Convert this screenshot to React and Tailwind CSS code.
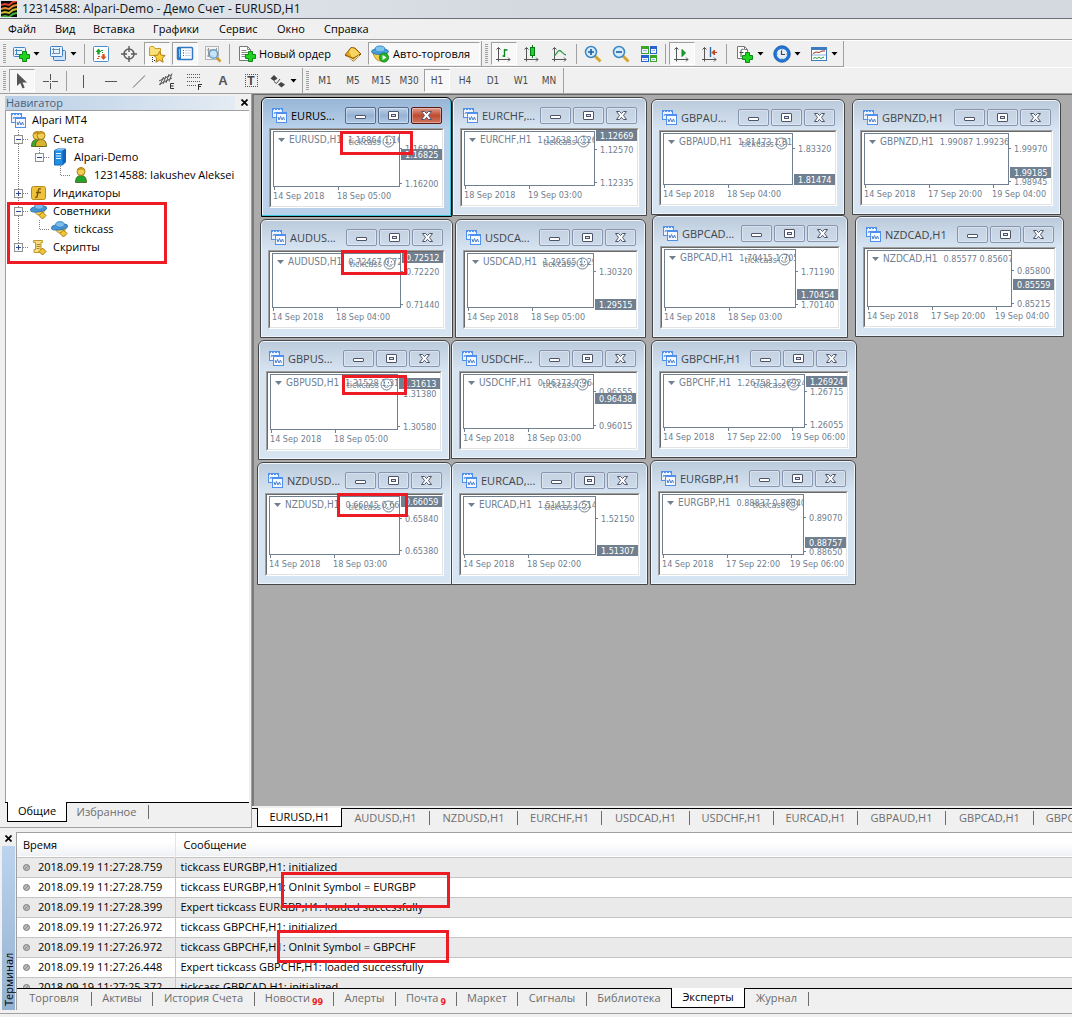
import React from "react";

const UI = "font-['Open_Sans','Noto_Sans',sans-serif]";
const NARROW = "font-['DejaVu_Sans_Condensed','DejaVu_Sans',sans-serif]";

/* ---------- small building blocks ---------- */

function Svg({ w = 18, h = 18, children, crisp = false }) {
  return (
    <svg
      width={w}
      height={h}
      viewBox={`0 0 ${w} ${h}`}
      fill="none"
      className="shrink-0"
      aria-hidden="true"
      shapeRendering={crisp ? "crispEdges" : "auto"}
    >
      {children}
    </svg>
  );
}

const Plus = ({ x = 7, y = 6 }) => (
  <path
    transform={`translate(${x} ${y})`}
    d="M3.500 .5h4v3h3v4h-3v3h-4v-3h-3v-4h3z"
    fill="#1fd41f"
    stroke="#0a8a14"
  />
);

const Axes = () => (
  <path d="M3.500 2.500v14M1 14.500h14M1.500 4.500l2-2 2 2M13 12.500l2 2-2 2" stroke="#555" />
);

const Shades = {
  newChart: (
    <Svg>
      <rect x="1.500" y="2.500" width="12" height="9" rx="1" fill="#e8f3fd" stroke="#3f86c6" />
      <path d="M4.500 4v6M3 5.500h7M3 9.500h7" stroke="#3f86c6" />
      <Plus />
    </Svg>
  ),
  profiles: (
    <Svg>
      <rect x="4.500" y="5.500" width="12" height="10" rx="1" fill="#cfe4f8" stroke="#3f7fc0" />
      <rect x="1.500" y="1.500" width="12" height="10" rx="1" fill="#e8f3fd" stroke="#3f7fc0" />
      <path d="M4.500 3v6M3 4.500h8M3 8.500h8M10.500 3v6" stroke="#6b8fb5" />
    </Svg>
  ),
  market: (
    <Svg>
      <rect x="1.500" y="1.500" width="15" height="15" rx="1" fill="#fff" stroke="#4a90d0" />
      <path d="M6.500 3.500l3 3.500H7.700v2.500H5.300V7H3.500z" fill="#18a32a" />
      <path d="M11.500 15l3-3.500h-1.800V9h-2.400v2.500H8.500z" fill="#d8501e" />
      <path d="M9 5.500h2M10 7.500h1" stroke="#18a32a" />
      <path d="M6 11.500h2M5 13.500h2" stroke="#d8501e" />
    </Svg>
  ),
  cross: (
    <Svg>
      <circle cx="9" cy="9" r="5" stroke="#5c5c5c" strokeWidth="1.500" />
      <path d="M9 1v6M9 11v6M1 9h6M11 9h6" stroke="#5c5c5c" strokeWidth="1.400" />
    </Svg>
  ),
  folderStar: (
    <Svg>
      <path d="M1.500 10.500v-8l1-1h3l1.500 2h5.500v7z" fill="#f8e07a" stroke="#c99b22" />
      <path d="M4.500 12v5M6 15.500h3" stroke="#333" strokeDasharray="1 1" />
      <path d="M11.500 6.500l1.700 3.600 4 .4-3 2.700.9 4-3.600-2.100-3.600 2.100.9-4-3-2.700 4-.4z" fill="#f9cf3a" stroke="#b07d10" />
    </Svg>
  ),
  terminal: (
    <Svg>
      <rect x="1.500" y="2.500" width="15" height="12" rx="1" fill="#fff" stroke="#2f78c4" strokeWidth="1.500" />
      <rect x="2" y="3" width="3" height="11" fill="#2f78c4" />
      <path d="M3 5h1M3 7h1M3 9h1M3 11h1" stroke="#fff" />
      <path d="M9 5.500h6M9 8h6M9 10.500h6" stroke="#c6d3e2" />
      <path d="M7 5.500h1M7 10.500h1" stroke="#d33" />
      <path d="M7 8h1" stroke="#234" />
    </Svg>
  ),
  tester: (
    <Svg>
      <rect x="1.500" y="1.500" width="13" height="13" fill="#f4f4f4" stroke="#b4b4b4" />
      <path d="M4.500 3v9M3 5h9M12.500 3v9M3 11h7" stroke="#999" />
      <path d="M12.500 12.500l4 4" stroke="#d09a30" strokeWidth="2.600" />
      <circle cx="9.500" cy="9" r="4.200" fill="#bfe0f7" fillOpacity=".85" stroke="#5b9bd0" strokeWidth="1.300" />
    </Svg>
  ),
  newOrder: (
    <Svg>
      <path d="M1.500 1.500h8l3 3v11h-11z" fill="#fff" stroke="#777" />
      <path d="M9.500 1.500v3h3M3.500 5.500h5M3.500 7.500h7M3.500 9.500h5M3.500 11.500h4" stroke="#888" />
      <Plus />
    </Svg>
  ),
  book: (
    <Svg>
      <path d="M1 10l6-7.500 4 .5 6 6-7.500 7z" fill="#e2a520" stroke="#8f5c0c" />
      <path d="M7.500 3l3 1L16 9l-6.500 3.500-2-1L5 7z" fill="#f7d562" />
      <path d="M1.500 10l7.500 3.500L16.500 9" stroke="#8f5c0c" />
      <path d="M3 12l6.500 3 5.500-4.500" stroke="#fff0bd" />
    </Svg>
  ),
  auto: (
    <Svg>
      <path d="M2 8c2 6 4 8 8 8s6-4 6-8z" fill="#f1cd4b" stroke="#c19422" />
      <ellipse cx="9" cy="6.500" rx="8.500" ry="3" fill="#4aa0dc" stroke="#2b78b5" />
      <ellipse cx="9" cy="4" rx="4.800" ry="3" fill="#7fc3f0" stroke="#3a8ac8" />
      <circle cx="13" cy="12.500" r="4.500" fill="#2bb52b" stroke="#0f8a16" />
      <path d="M11.500 10l4 2.500-4 2.500z" fill="#fff" />
    </Svg>
  ),
  bars: (
    <Svg>
      <Axes />
      <path d="M9.500 4v8M7.500 11h2M9.500 5h3" stroke="#0a8a20" strokeWidth="1.400" />
    </Svg>
  ),
  candles: (
    <Svg>
      <Axes />
      <path d="M9.500 0v13" stroke="#0a7a18" />
      <rect x="7.500" y="2.500" width="4" height="8" fill="#18d42c" stroke="#0a7a18" />
    </Svg>
  ),
  line: (
    <Svg>
      <Axes />
      <path d="M3 11c2-1 3.500-5.500 5.500-5.500S12 9.500 15 10" stroke="#3b9a4c" strokeWidth="1.300" />
    </Svg>
  ),
  zoomIn: (
    <Svg>
      <path d="M11 11l5.500 5.500" stroke="#d8a52c" strokeWidth="3" />
      <circle cx="7" cy="7" r="5.500" fill="#d4ecfb" stroke="#3d86c4" strokeWidth="1.500" />
      <path d="M7 4v6M4 7h6" stroke="#1c5f9c" strokeWidth="1.600" />
    </Svg>
  ),
  zoomOut: (
    <Svg>
      <path d="M11 11l5.500 5.500" stroke="#d8a52c" strokeWidth="3" />
      <circle cx="7" cy="7" r="5.500" fill="#d4ecfb" stroke="#3d86c4" strokeWidth="1.500" />
      <path d="M4 7h6" stroke="#1c5f9c" strokeWidth="1.600" />
    </Svg>
  ),
  tile: (
    <Svg crisp>
      <path d="M1 1h8v8H1zM10 10h7v7h-7z" fill="#3da526" />
      <path d="M10 1h7v8h-7zM1 10h8v7H1z" fill="#2a62cf" />
      <path d="M2 4h6v4H2zM11 4h5v4h-5zM2 13h6v3H2zM11 13h5v3h-5z" fill="#eef4ff" />
      <path d="M3 5.500h4M12 5.500h3M3 14.500h4M12 14.500h3" stroke="#9bb4d8" />
    </Svg>
  ),
  autoscroll: (
    <Svg>
      <Axes />
      <path d="M9 4.500v7l3.500-3.500z" fill="#18a32a" stroke="#0a8a20" />
    </Svg>
  ),
  shift: (
    <Svg>
      <Axes />
      <path d="M9.500 2v10" stroke="#2b6ea8" strokeWidth="1.400" />
      <path d="M16 7.500h-3M13.500 5l-2.500 2.500 2.500 2.500z" fill="#c8421a" stroke="#c8421a" />
    </Svg>
  ),
  indicators: (
    <Svg>
      <path d="M1.500 1.500h7l3 3v9h-10z" fill="#fff" stroke="#777" />
      <path d="M8.500 1.500v3h3" stroke="#777" />
      <path d="M7.500 4.500c-2-.8-2.500.5-2.500 2v5.500M3.500 7.500h4" stroke="#444" />
      <Plus x={6} y={7} />
    </Svg>
  ),
  clock: (
    <Svg>
      <circle cx="9" cy="9" r="6.800" fill="#e6f0fa" stroke="#1f74d6" strokeWidth="3" />
      <circle cx="9" cy="9" r="8.300" stroke="#124f9c" strokeWidth=".7" />
      <path d="M8.500 5.500v4h3.500" stroke="#444" strokeWidth="1.200" />
      <path d="M9 4v.8M9 13.200v.8M4 9h.8M13.200 9h.8" stroke="#777" />
    </Svg>
  ),
  templates: (
    <Svg>
      <rect x="1.500" y="2.500" width="15" height="13" fill="#fff" stroke="#3b7cc0" />
      <path d="M1 3.500h16" stroke="#3b7cc0" strokeWidth="3" />
      <path d="M2 10h14" stroke="#8ab0d8" />
      <path d="M3 8.500l3-1.500 3 .5 3-1.500h3" stroke="#a03018" />
      <path d="M3 13.500l2-1 2 1 2-1.500 2 1.500 3-1.500" stroke="#2b9a3c" />
    </Svg>
  ),
  cursor: (
    <Svg>
      <path d="M4 1v13l3.200-3 2.300 5.500 2.200-1L9.500 10.500H14z" fill="#555" />
    </Svg>
  ),
  crosshair: (
    <Svg crisp>
      <path d="M9.500 2v6M9.500 11v6M2 9.500h6M11 9.500h6M9 9.500h1" stroke="#555" />
    </Svg>
  ),
  vline: (
    <Svg crisp>
      <path d="M9.500 3v13" stroke="#555" />
    </Svg>
  ),
  hline: (
    <Svg crisp>
      <path d="M3 9.500h12" stroke="#555" />
    </Svg>
  ),
  diag: (
    <Svg>
      <path d="M3 15.500L15 3.500" stroke="#666" />
    </Svg>
  ),
  channel: (
    <Svg>
      <path d="M1 9L13 3M1 12.500L14 6M2 13l3.500-8M5 12l3-8M8 11l3-9M11 9.500l3-8" stroke="#555" />
      <path d="M12.500 11.500v5M12.500 11.500h3.500M12.500 14h3M12.500 16.500h3.500" stroke="#333" />
    </Svg>
  ),
  fib: (
    <Svg crisp>
      <path d="M1 2.500h14M1 5.500h14M1 9.500h14M1 13.500h9" stroke="#555" strokeDasharray="1 1" />
      <path d="M12.500 12v6M12 12.500h4M12 14.500h3" stroke="#333" />
    </Svg>
  ),
  shapes: (
    <Svg>
      <path d="M1.500 6.500L5 3l3.500 3.500L5 9z" fill="#444" />
      <path d="M5 9.500l2.500 2 3.500-4.500" stroke="#444" />
      <path d="M9 12.500l3-2.500 4 2.500-3.500 3z" fill="#444" />
    </Svg>
  ),
};

const ChartIcon = () => (
  <Svg w={15} h={15}>
    <rect x=".5" y=".5" width="10" height="9" fill="#eef5ff" stroke="#4f90ee" />
    <path d="M0 1.500h11" stroke="#4f90ee" strokeDasharray="2 1" />
    <path d="M2 6l1-2 1.500 2L6 4" stroke="#5b93dd" />
    <rect x="4.500" y="4.500" width="10" height="10" fill="#f6faff" stroke="#4f90ee" />
    <path d="M4 5.500h11" stroke="#4f90ee" />
    <path d="M6 9l1 3 1.500-3.500L10 12l1.500-3 1 3" stroke="#4d7fd0" />
  </Svg>
);

/* ---------- title bar, menu, toolbars ---------- */

function TitleBar() {
  return (
    <header className="flex h-[19px] items-center gap-[5px] overflow-hidden border-b border-[#6b6f74] bg-linear-to-r from-[#e4e9ee] via-[#d3d9df] to-[#d3d9df] pl-px text-xs text-[#111]">
      <svg width="16" height="16" viewBox="0 0 16 16" className="shrink-0" fill="none" strokeWidth="2" aria-hidden="true">
        <rect width="16" height="16" fill="#0a0a0a" />
        <path d="M0 4l4-1 4 1 4-3 4-1" stroke="#e8412a" />
        <path d="M0 8l4-1 4 1 4-3 4-1" stroke="#e8912a" />
        <path d="M0 12l4-1 4 1 4-3 4-1" stroke="#c9c02a" />
        <path d="M0 16l4-1 4 1 4-3 4-1" stroke="#3fae3a" />
      </svg>
      <h1 className="whitespace-nowrap leading-4">12314588: Alpari-Demo - Демо Счет - EURUSD,H1</h1>
    </header>
  );
}

const menu = [
  ["Файл", "w-[47px]"],
  ["Вид", "w-[38px]"],
  ["Вставка", "w-15"],
  ["Графики", "w-[66px]"],
  ["Сервис", "w-[58px]"],
  ["Окно", "w-[47px]"],
  ["Справка", "w-16"],
];

function MenuBar() {
  return (
    <nav className="flex h-[21px] items-center border-b border-[#a0a0a0] text-[11px] text-black">
      {menu.map(([label, w]) => (
        <button key={label} type="button" className={`shrink-0 pl-2 text-left leading-4 whitespace-nowrap ${w}`}>
          {label}
        </button>
      ))}
    </nav>
  );
}

const Grip = () => (
  <span className="ml-[3px] mr-0.5 h-5 w-[3px] shrink-0 bg-[repeating-linear-gradient(to_bottom,#a0a0a0_0_1px,#f0f0f0_1px_2px)]" />
);
const Sep = () => <span className="mx-0.5 h-5 w-px shrink-0 bg-[#a0a0a0]" />;
const Caret = () => (
  <svg width="7" height="4" viewBox="0 0 7 4" className="shrink-0" aria-hidden="true">
    <path d="M.5 0h6L3.500 3.500z" fill="#000" />
  </svg>
);

function Tool({ label, pressed, children }) {
  const frame = pressed
    ? "border-t-[#a0a0a0] border-l-[#a0a0a0] border-r-white border-b-white bg-[#f8f8f8]"
    : "border-transparent";
  return (
    <span className="flex w-7 shrink-0 justify-center">
      <button
        type="button"
        aria-label={label}
        aria-pressed={pressed ? true : undefined}
        className={`flex h-[23px] w-[26px] items-center justify-center border ${frame}`}
      >
        {children}
      </button>
    </span>
  );
}

const DropTool = ({ label, children }) => (
  <button type="button" aria-label={label} className="flex h-[23px] w-[37px] shrink-0 items-center gap-[3px] pl-1">
    {children}
    <Caret />
  </button>
);

const strip = "flex items-center border-r border-[#a0a0a0]";

function MainToolbar() {
  return (
    <div className="flex h-[27px] border-t border-white" role="toolbar" aria-label="Стандартная">
      <div className={`${strip} w-[482px] justify-between border-b`}>
        <div className="flex items-center">
          <Grip />
          <DropTool label="Новый график">{Shades.newChart}</DropTool>
          <DropTool label="Профили">{Shades.profiles}</DropTool>
          <Sep />
          <Tool label="Обзор рынка">{Shades.market}</Tool>
          <Tool label="Окно данных">{Shades.cross}</Tool>
          <Tool label="Навигатор" pressed>{Shades.folderStar}</Tool>
          <Tool label="Терминал" pressed>{Shades.terminal}</Tool>
          <Tool label="Тестер стратегий">{Shades.tester}</Tool>
          <Sep />
        </div>
        <div className="flex items-center">
          <button type="button" className="flex w-[101px] items-center gap-[3px] text-[11px] leading-4 whitespace-nowrap text-black">
            {Shades.newOrder}
            <span>Новый ордер</span>
          </button>
          <Tool label="Редактор">{Shades.book}</Tool>
          <button
            type="button"
            aria-pressed="true"
            className="mx-px flex h-[23px] w-28 items-center gap-1 border border-t-[#a0a0a0] border-r-white border-b-white border-l-[#a0a0a0] bg-[#f8f8f8] pl-0.5 text-[11px] leading-4 whitespace-nowrap text-black"
          >
            {Shades.auto}
            <span>Авто-торговля</span>
          </button>
        </div>
      </div>
      <div className={`${strip} border-b`}>
        <Grip />
        <Tool label="Бары" pressed>{Shades.bars}</Tool>
        <Tool label="Свечи">{Shades.candles}</Tool>
        <Tool label="Линия">{Shades.line}</Tool>
        <Sep />
        <Tool label="Увеличить">{Shades.zoomIn}</Tool>
        <Tool label="Уменьшить">{Shades.zoomOut}</Tool>
        <Tool label="Мозаика">{Shades.tile}</Tool>
        <Sep />
        <Tool label="Автопрокрутка" pressed>{Shades.autoscroll}</Tool>
        <Tool label="Сдвиг графика">{Shades.shift}</Tool>
        <Sep />
        <div className="ml-[3px] flex items-center">
          <DropTool label="Индикаторы">{Shades.indicators}</DropTool>
          <DropTool label="Периоды">{Shades.clock}</DropTool>
          <DropTool label="Шаблоны">{Shades.templates}</DropTool>
        </div>
      </div>
    </div>
  );
}

const periods = ["M1", "M5", "M15", "M30", "H1", "H4", "D1", "W1", "MN"];

function DrawToolbar() {
  return (
    <div className="flex h-[27px] border-t border-b border-t-white border-b-[#a0a0a0]" role="toolbar" aria-label="Графические инструменты">
      <div className={strip}>
        <Grip />
        <Tool label="Курсор" pressed>{Shades.cursor}</Tool>
        <Tool label="Перекрестие">{Shades.crosshair}</Tool>
        <Sep />
        <Tool label="Вертикальная линия">{Shades.vline}</Tool>
        <Tool label="Горизонтальная линия">{Shades.hline}</Tool>
        <Tool label="Трендовая линия">{Shades.diag}</Tool>
        <Tool label="Канал">{Shades.channel}</Tool>
        <Tool label="Фибоначчи">{Shades.fib}</Tool>
        <Tool label="Текст">
          <span className="text-[13px] leading-4 font-bold text-[#555] font-['Liberation_Sans',sans-serif]">A</span>
        </Tool>
        <Tool label="Метка">
          <span className="flex size-[13px] items-center justify-center border border-dotted border-[#555] text-[12px] leading-3 font-bold text-[#444] font-['Liberation_Sans',sans-serif]">
            T
          </span>
        </Tool>
        <DropTool label="Стрелки">{Shades.shapes}</DropTool>
      </div>
      <div className={strip}>
        <Grip />
        {periods.map((p) => (
          <Tool key={p} label={p} pressed={p === "H1"}>
            <span className={`${NARROW} text-[10px] leading-3 text-[#4a4a4a]`}>{p}</span>
          </Tool>
        ))}
      </div>
    </div>
  );
}

/* ---------- navigator ---------- */

const CloseGlyph = () => (
  <svg width="7" height="7" viewBox="0 0 7 7" aria-hidden="true">
    <path d="M.5 .5l6 6M6.500 .5l-6 6" stroke="#000" strokeWidth="1.700" />
  </svg>
);

function Guide({ kind }) {
  const box = kind.startsWith("plus") || kind.startsWith("minus");
  const last = kind.endsWith("last") || kind === "end";
  return (
    <svg width="21" height="18" viewBox="0 0 21 18" className="shrink-0" shapeRendering="crispEdges" fill="none" aria-hidden="true">
      {kind !== "none" && (
        <path d={last ? "M10.500 0v9" : "M10.500 0v18"} stroke="#808080" strokeDasharray="1 1" />
      )}
      {kind !== "none" && kind !== "line" && <path d="M11 9.500h10" stroke="#808080" strokeDasharray="1 1" />}
      {box && <rect x="6.500" y="5.500" width="8" height="8" fill="#fafafa" stroke="#919191" />}
      {box && <path d="M8 9.500h5" stroke="#2f4a9c" />}
      {kind.startsWith("plus") && <path d="M10.500 7v5" stroke="#2f4a9c" />}
    </svg>
  );
}

const Person = ({ x = 0, color = "#1fa52a" }) => (
  <g transform={`translate(${x} 0)`}>
    <path d="M1.500 16.500c0-5 2-7 5.500-7s5.500 2 5.500 7z" fill={color} stroke="#55510f" strokeWidth=".8" />
    <circle cx="7" cy="5.500" r="4" fill="#f1cf52" stroke="#a67b15" />
    <path d="M3 5c.5-4 7.500-4 8 0-2-2-5-2-8 0z" fill="#c8921c" />
  </g>
);

const Expert = () => (
  <Svg>
    <path d="M4 7c1 5 3 6 6 6s4-2 5-6z" fill="#efcf55" stroke="#c2982c" />
    <ellipse cx="8.500" cy="7" rx="8" ry="2.800" fill="#4795d4" stroke="#2f76b4" transform="rotate(-8 8.500 7)" />
    <ellipse cx="9" cy="4.500" rx="4.300" ry="2.800" fill="#7cbdec" stroke="#3a86c4" />
    <path d="M12.500 10l3.500 3.500-3.500 3.500-3.500-3.500z" fill="#f2c637" stroke="#a57712" />
  </Svg>
);

const treeIcons = {
  root: <ChartIcon />,
  accounts: (
    <Svg>
      <Person color="#3aa82e" />
      <Person x={4} color="#d8b52c" />
    </Svg>
  ),
  server: (
    <Svg>
      <path d="M3.500 2.500l3-1.500h8v13l-3 3h-8z" fill="#1f8fe6" stroke="#1565b4" />
      <path d="M3.500 2.500l3-1.500h8l-3 1.500z" fill="#7cc4f8" />
      <path d="M11.500 2.500v14l3-2.500V1z" fill="#0f62b8" />
      <path d="M5 5.500h5M5 8h5M5 10.500h5" stroke="#e6f4ff" />
    </Svg>
  ),
  user: (
    <Svg w={17}>
      <Person x={2} />
    </Svg>
  ),
  indicator: (
    <Svg>
      <rect x="1.500" y="2.500" width="14" height="13" rx="2" fill="#edc23c" stroke="#b58a1a" />
      <path d="M11 5c-2-1-2.500 0-3 3l-.8 4c-.3 1.500-1 1.500-2.200 1M6 8.500h5" stroke="#7a5206" strokeWidth="1.300" />
    </Svg>
  ),
  expert: <Expert />,
  script: (
    <Svg>
      <path d="M3.500 2.500h9v2h-1.500v7h2v3h-9v-3h1.500v-7h-2z" fill="#f4dd83" stroke="#c29a2c" />
      <path d="M6.500 6.500h4M6.500 8.500h4M6.500 10.500h3" stroke="#b08820" />
      <path d="M12.500 10l3.500 3.500-3.500 3.500-3.500-3.500z" fill="#f2c637" stroke="#a57712" />
    </Svg>
  ),
};

const tree = [
  { label: "Счета", icon: "accounts", guides: ["minus"] },
  { label: "Alpari-Demo", icon: "server", guides: ["line", "minus-last"] },
  { label: "12314588: Iakushev Aleksei", icon: "user", guides: ["line", "none", "end"] },
  { label: "Индикаторы", icon: "indicator", guides: ["plus"] },
  { label: "Советники", icon: "expert", guides: ["minus"] },
  { label: "tickcass", icon: "expert", guides: ["line", "end"] },
  { label: "Скрипты", icon: "script", guides: ["plus-last"] },
];

function Navigator() {
  return (
    <aside className="relative flex w-[251px] shrink-0 flex-col border-b border-[#a0a0a0] pt-[2px] pl-[5px]">
      <div className="flex h-3.5 items-start">
        <h2 className="w-[230px] bg-linear-to-r from-[#b9cfe6] to-[#e4ebf3] pl-px text-[11px] leading-[14px] text-[#4c5f78]">Навигатор</h2>
        <button type="button" aria-label="Закрыть" className="ml-0.5 flex h-3 w-3.5 items-center justify-center">
          <CloseGlyph />
        </button>
      </div>
      <div className="mr-0.5 flex-1 border-t border-l border-[#a0a0a0] bg-white text-[11px] text-black">
        <ul>
          <li className="mb-px flex h-[18px] items-center gap-1.5 pl-[5px]">
            {treeIcons.root}
            <span className="leading-4">Alpari MT4</span>
          </li>
          {tree.map((n) => (
            <li key={n.label} className="flex h-[18px] items-center pl-0.5">
              {n.guides.map((g, i) => (
                <Guide key={i} kind={g} />
              ))}
              <span className="ml-px flex gap-[5px] whitespace-nowrap">
                {treeIcons[n.icon]}
                <span className="leading-[18px]">{n.label}</span>
              </span>
            </li>
          ))}
        </ul>
      </div>
      <div className="flex h-[25px] items-start text-[11px]">
        <span className="h-px w-0.5 bg-black" />
        <button type="button" className="h-5 w-15 border border-t-0 border-black bg-white pb-0.5 leading-4 text-black">
          Общие
        </button>
        <span className="mr-0.5 flex h-[19px] flex-1 items-center border-t border-black">
          <button type="button" className="h-3.5 w-[82px] border-r border-[#6d6d6d] pr-0.5 leading-3 text-[#6d6d6d]">
            Избранное
          </button>
        </span>
      </div>
      <span className="absolute top-[108px] left-[7px] h-[62px] w-40 border-3 border-[#ed1c24]" />
    </aside>
  );
}

/* ---------- chart windows ---------- */

/* axis entries: [price, vertical centre inside the plot, is current price] */
const windows = [
  { s: "EURCHF", t: "EURCHF,...", x: 452, y: 97, w: 195, h: 119, q: "1.12638 1.126", ea: 1, d: ["18 Sep 2018", "19 Sep 03:00"], a: [["1.12669", 5, 1], ["1.12570", 19], ["1.12335", 52]] },
  { s: "EURUSD", t: "EURUS...", x: 261, y: 97, w: 191, h: 120, q: "1.16864 1.168", ea: 1, active: 1, d: ["14 Sep 2018", "18 Sep 05:00"], a: [["1.16830", 18], ["1.16825", 24, 1], ["1.16200", 53]] },
  { s: "GBPAUD", t: "GBPAU...", x: 651, y: 99, w: 194, h: 116, q: "1.81473 1.815", ea: 1, d: ["14 Sep 2018", "18 Sep 04:00"], a: [["1.83320", 16], ["1.81474", 47, 1]] },
  { s: "GBPNZD", t: "GBPNZD,H1", x: 852, y: 99, w: 209, h: 116, q: "1.99087 1.99236", d: ["14 Sep 2018", "17 Sep 20:00", "19 Sep 04:00"], a: [["1.99970", 16], ["1.98945", 49], ["1.99185", 40, 1]] },
  { s: "AUDUSD", t: "AUDUS...", x: 260, y: 219, w: 193, h: 119, q: "0.72467 0.725", ea: 1, d: ["14 Sep 2018", "18 Sep 04:00"], a: [["0.72512", 5, 1], ["0.72220", 19], ["0.71440", 52]] },
  { s: "USDCAD", t: "USDCA...", x: 455, y: 219, w: 191, h: 119, q: "1.29565 1.296", ea: 1, d: ["14 Sep 2018", "18 Sep 05:00"], a: [["1.30320", 19], ["1.29515", 52, 1]] },
  { s: "GBPCAD", t: "GBPCAD...", x: 652, y: 215, w: 196, h: 123, q: "1.70415 1.705", ea: 1, d: ["14 Sep 2018", "18 Sep 03:00"], a: [["1.71190", 23], ["1.70140", 56], ["1.70454", 46, 1]] },
  { s: "NZDCAD", t: "NZDCAD,H1", x: 855, y: 216, w: 209, h: 121, q: "0.85577 0.85607", d: ["14 Sep 2018", "17 Sep 20:00", "19 Sep 04:00"], a: [["0.85800", 21], ["0.85559", 35, 1], ["0.85215", 54]] },
  { s: "GBPUSD", t: "GBPUS...", x: 258, y: 340, w: 192, h: 120, q: "1.31528 1.315", ea: 1, d: ["14 Sep 2018", "18 Sep 05:00"], a: [["1.31380", 20], ["1.31613", 10, 1], ["1.30580", 53]] },
  { s: "USDCHF", t: "USDCHF...", x: 451, y: 340, w: 195, h: 119, q: "0.96373 0.964", ea: 1, d: ["14 Sep 2018", "18 Sep 03:00"], a: [["0.96555", 18], ["0.96438", 25, 1], ["0.96015", 52]] },
  { s: "GBPCHF", t: "GBPCHF,H1", x: 651, y: 340, w: 206, h: 118, q: "1.26758 1.26924", ea: 1, d: ["14 Sep 2018", "17 Sep 22:00", "19 Sep 06:00"], a: [["1.26715", 18], ["1.26924", 8, 1], ["1.26055", 51]] },
  { s: "NZDUSD", t: "NZDUSD...", x: 257, y: 462, w: 195, h: 123, q: "0.66045 0.661", ea: 1, d: ["14 Sep 2018", "18 Sep 03:00"], a: [["0.66059", 6, 1], ["0.65840", 23], ["0.65380", 55]] },
  { s: "EURCAD", t: "EURCAD,...", x: 451, y: 462, w: 197, h: 123, q: "1.51417 1.514", ea: 1, d: ["14 Sep 2018", "18 Sep 02:00"], a: [["1.52150", 23], ["1.51307", 55, 1]] },
  { s: "EURGBP", t: "EURGBP,H1", x: 650, y: 460, w: 206, h: 125, q: "0.88837 0.88840", ea: 1, d: ["14 Sep 2018", "17 Sep 22:00", "19 Sep 06:00"], a: [["0.89070", 24], ["0.88650", 58], ["0.88757", 49, 1]] },
];

const CANVAS_X = 254;
const CANVAS_Y = 95;

function CaptionButton({ kind, active }) {
  const look = !active
    ? "border-[#8795b0] bg-linear-to-b from-[#c5d2e2] to-[#cddaea]"
    : kind === "close"
      ? "border-[#5b1b14] bg-linear-to-b from-[#dc9a8c] via-[#c04a30] to-[#cf7460]"
      : "border-[#566b8b] bg-linear-to-b from-[#bacfe8] via-[#96b2d3] to-[#b2cbe6]";
  const names = { min: "Свернуть", max: "Развернуть", close: "Закрыть" };
  return (
    <button
      type="button"
      aria-label={names[kind]}
      className={`flex h-[17px] w-[31px] shrink-0 items-center justify-center rounded-xs border shadow-[inset_0_0_0_1px_rgba(255,255,255,0.35)] ${look}`}
    >
      <svg width="13" height="11" viewBox="0 0 13 11" fill="none" aria-hidden="true">
        {kind === "min" && <rect x="1.500" y="5.500" width="10" height="3" rx=".5" fill="#fff" stroke="#4d5368" />}
        {kind === "max" && (
          <>
            <rect x="1.500" y="1.500" width="10" height="8" rx=".5" fill="#fff" stroke="#4d5368" />
            <rect x="4.500" y="4.500" width="4" height="2" fill="#dde6f2" stroke="#4d5368" />
          </>
        )}
        {kind === "close" && (
          <path
            d="M1.500 1.500h3l2 2 2-2h3L8.500 5.500l3 4h-3l-2-2.200-2 2.200h-3l3-4z"
            fill="#fff"
            stroke="#4d5368"
          />
        )}
      </svg>
    </button>
  );
}

const Smiley = () => (
  <svg width="13" height="13" viewBox="0 0 13 13" fill="none" stroke="#708090" className="shrink-0" aria-hidden="true">
    <circle cx="6.500" cy="6.500" r="5.500" />
    <path d="M3.500 7.500c1 2.300 5 2.300 6 0M4.500 4v1.500M8.500 4v1.500" />
  </svg>
);

function ChartWindow({ win }) {
  const frame = win.active
    ? "border-black bg-[#b9d1ea] shadow-[inset_-1px_-1px_0_#35c6dc,inset_1px_1px_0_#f2f8ff]"
    : "border-[#464646] bg-[#d7e4f2] shadow-[inset_0_0_0_1px_#eef4fb]";
  const caption = win.active ? "from-[#98b5d7] to-[#b9d1ea] text-black" : "from-[#bccbdb] to-[#d7e4f2] text-[#40454c]";
  return (
    <section
      aria-label={`${win.s},H1`}
      className={`absolute flex flex-col rounded-t-md border px-[7px] pb-2 ${frame}`}
      style={{ left: win.x - CANVAS_X, top: win.y - CANVAS_Y, width: win.w, height: win.h }}
    >
      <div className={`-mx-1.5 mt-px flex h-[29px] shrink-0 items-center rounded-t-sm bg-linear-to-b pt-2 pr-2 pb-1 pl-[9px] ${caption}`}>
        <ChartIcon />
        <h3 className="ml-1 min-w-0 flex-1 text-[11px] leading-4 whitespace-nowrap">{win.t}</h3>
        <div className="flex gap-0.5">
          <CaptionButton kind="min" active={win.active} />
          <CaptionButton kind="max" active={win.active} />
          <CaptionButton kind="close" active={win.active} />
        </div>
      </div>
      <div className="flex min-h-0 flex-1 flex-col border border-t-[#a0a0a0] border-r-white border-b-white border-l-[#a0a0a0]">
        <div className={`flex flex-1 flex-col border border-t-[#696969] border-r-[#e3e3e3] border-b-[#e3e3e3] border-l-[#696969] bg-white pt-px pl-0.5 text-[9px] leading-3 text-[#708090] ${NARROW}`}>
          <div className="flex min-h-0 flex-1">
            <div className="relative min-w-0 flex-1 overflow-hidden border border-[#708090]">
              <div className="flex items-center pt-0.5 pl-1 whitespace-nowrap">
                <svg width="7" height="4" viewBox="0 0 7 4" className="mr-1 shrink-0" aria-hidden="true">
                  <path d="M0 0h7L3.500 4z" fill="#708090" />
                </svg>
                <span className="mr-1.5 text-[10px]">{win.s},H1</span>
                <span>{win.q}</span>
              </div>
              {win.ea && (
                <span className="absolute top-[3px] right-1 flex items-center gap-px">
                  tickcass
                  <Smiley />
                </span>
              )}
            </div>
            <div className="relative w-[42px] shrink-0">
              {win.a.map(([price, pos, current]) => (
                <span
                  key={price}
                  className={`absolute right-0 left-px flex h-[11px] -translate-y-1.5 items-center ${current ? "bg-[#708090] text-white" : "before:absolute before:-left-px before:h-px before:w-0.5 before:bg-[#708090]"}`}
                  style={{ top: pos }}
                >
                  <span className="pl-1">{price}</span>
                </span>
              ))}
            </div>
          </div>
          <div className="flex h-[19px] shrink-0 whitespace-nowrap">
            {win.d.map((d) => (
              <span key={d} className="w-16 shrink-0">
                <span className="ml-px block h-[3px] w-px bg-[#708090]" />
                {d}
              </span>
            ))}
          </div>
        </div>
      </div>
    </section>
  );
}

const chartTabs = [
  ["AUDUSD,H1", "w-22"],
  ["NZDUSD,H1", "w-22"],
  ["EURCHF,H1", "w-21"],
  ["USDCAD,H1", "w-22"],
  ["USDCHF,H1", "w-21"],
  ["EURCAD,H1", "w-21"],
  ["GBPAUD,H1", "w-22"],
  ["GBPCAD,H1", "w-22"],
  ["GBPCHF,H1", "w-21"],
];

function Workspace() {
  return (
    <main className="flex min-w-0 flex-1 flex-col border-l border-[#a0a0a0]">
      <div className="relative flex-1 overflow-hidden border-t border-l-2 border-[#696969] border-l-[#7a7a7a] bg-[#ababab]">
        {windows.map((w) => (
          <ChartWindow key={w.s} win={w} />
        ))}
        <span className="absolute top-9 left-[86px] h-6 w-[73px] border-3 border-[#ed1c24]" />
        <span className="absolute top-[155px] left-[87px] h-[25px] w-[66px] border-3 border-[#ed1c24]" />
        <span className="absolute top-[280px] left-[88px] h-5 w-[65px] border-3 border-[#ed1c24]" />
        <span className="absolute top-[398px] left-[83px] h-6 w-[71px] border-3 border-[#ed1c24]" />
      </div>
      <div className="mt-0.5 flex h-5 shrink-0 overflow-hidden text-[11px]">
        <span className="h-px w-[5px] shrink-0 bg-black" />
        <button type="button" className="h-[19px] w-[85px] shrink-0 border border-t-0 border-black bg-white leading-4 text-black">
          EURUSD,H1
        </button>
        <div className="flex h-[18px] min-w-0 flex-1 items-center overflow-hidden border-t border-black">
          {chartTabs.map(([t, w]) => (
            <button key={t} type="button" className={`h-3.5 shrink-0 border-r border-[#6d6d6d] leading-3.5 text-[#6d6d6d] ${w}`}>
              {t}
            </button>
          ))}
        </div>
      </div>
    </main>
  );
}

/* ---------- terminal ---------- */

const log = [
  ["2018.09.19 11:27:28.759", "tickcass EURGBP,H1: initialized"],
  ["2018.09.19 11:27:28.759", "tickcass EURGBP,H1: OnInit Symbol = EURGBP"],
  ["2018.09.19 11:27:28.399", "Expert tickcass EURGBP,H1: loaded successfully"],
  ["2018.09.19 11:27:26.972", "tickcass GBPCHF,H1: initialized"],
  ["2018.09.19 11:27:26.972", "tickcass GBPCHF,H1: OnInit Symbol = GBPCHF"],
  ["2018.09.19 11:27:26.448", "Expert tickcass GBPCHF,H1: loaded successfully"],
  ["2018.09.19 11:27:25.372", "tickcass GBPCAD,H1: initialized"],
];

const bottomTabs = [
  { t: "Торговля", w: "w-[75px]" },
  { t: "Активы", w: "w-[61px]" },
  { t: "История Счета", w: "w-[102px]" },
  { t: "Новости", w: "w-[79px]", n: "99" },
  { t: "Алерты", w: "w-[62px]" },
  { t: "Почта", w: "w-[61px]", n: "9" },
  { t: "Маркет", w: "w-[61px]" },
  { t: "Сигналы", w: "w-[69px]" },
  { t: "Библиотека", w: "w-[84px]", open: true },
  { t: "Эксперты", w: "w-[74px]", active: true },
  { t: "Журнал", w: "w-16" },
];

function Terminal() {
  return (
    <section className="mt-1 flex shrink-0 border-b border-[#a0a0a0] pb-[3px]">
      <div className="flex w-4 shrink-0 flex-col items-center">
        <button type="button" aria-label="Закрыть терминал" className="mb-0.5 flex h-3 w-4 items-center justify-center">
          <CloseGlyph />
        </button>
        <h2 className="flex w-[13px] flex-1 rotate-180 items-center bg-linear-to-t from-[#bcd4ee] to-[#93b0d0] pt-1 text-[11px] leading-[13px] text-black [writing-mode:vertical-rl]">
          Терминал
        </h2>
      </div>
      <div className="relative min-w-0 flex-1 border-t border-l border-[#a0a0a0]">
        <div className="h-[155px] overflow-hidden bg-white">
          <table className="w-full table-fixed border-collapse text-left text-[11px] text-black">
            <thead>
              <tr className="h-6 border-b border-[#c4c4c4] bg-linear-to-b from-white from-40% to-[#eff1f4]">
                <th scope="col" className="w-[158px] border-r border-[#e0e3e7] p-0 pl-1.5 leading-4 font-normal">Время</th>
                <th scope="col" className="p-0 pl-2 leading-4 font-normal">Сообщение</th>
              </tr>
            </thead>
            <tbody>
              {log.map(([time, msg], i) => (
                <tr key={i} className="h-5 border-b border-[#c4c4c4] odd:bg-[#eaeaea]">
                  <td className="border-r border-[#c4c4c4] p-0 pl-1.5">
                    <span className="flex items-center gap-2 leading-4 whitespace-nowrap">
                      <svg width="7" height="7" viewBox="0 0 7 7" className="shrink-0" aria-hidden="true">
                        <circle cx="3.500" cy="3.500" r="3" fill="#bdbdbd" stroke="#7a7a7a" />
                        <path d="M2 5l3-3" stroke="#8a8a8a" />
                      </svg>
                      {time}
                    </span>
                  </td>
                  <td className="p-0 pl-[5px] leading-4 whitespace-nowrap">{msg}</td>
                </tr>
              ))}
            </tbody>
          </table>
        </div>
        <div className="flex h-[22px] text-[11px]">
          {bottomTabs.map((b) =>
            b.active ? (
              <button key={b.t} type="button" className={`h-5 shrink-0 border border-t-0 border-black bg-white pb-0.5 leading-4 text-black ${b.w}`}>
                {b.t}
              </button>
            ) : (
              <span key={b.t} className={`flex h-5 shrink-0 items-center border-t border-black ${b.w}`}>
                <button
                  type="button"
                  className={`flex h-3.5 w-full items-center justify-center gap-0.5 leading-3.5 whitespace-nowrap text-[#6d6d6d] ${b.open ? "pb-0.5" : "border-r border-[#6d6d6d] pb-0.5"}`}
                >
                  {b.t}
                  {b.n && <span className={`pt-2 text-[9px] leading-3 font-bold text-[#ed1c24] ${NARROW}`}>{b.n}</span>}
                </button>
              </span>
            )
          )}
          <span className="h-px flex-1 bg-black" />
        </div>
        <span className="absolute top-[39px] left-[264px] h-9 w-[169px] border-3 border-[#ed1c24]" />
        <span className="absolute top-[97px] left-[260px] h-[33px] w-[172px] border-3 border-[#ed1c24]" />
      </div>
    </section>
  );
}

export default function App() {
  return (
    <div className={`flex h-screen flex-col overflow-hidden bg-[#f0f0f0] pb-[3px] ${UI}`}>
      <TitleBar />
      <MenuBar />
      <MainToolbar />
      <DrawToolbar />
      <div className="flex min-h-0 flex-1">
        <Navigator />
        <Workspace />
      </div>
      <Terminal />
    </div>
  );
}
